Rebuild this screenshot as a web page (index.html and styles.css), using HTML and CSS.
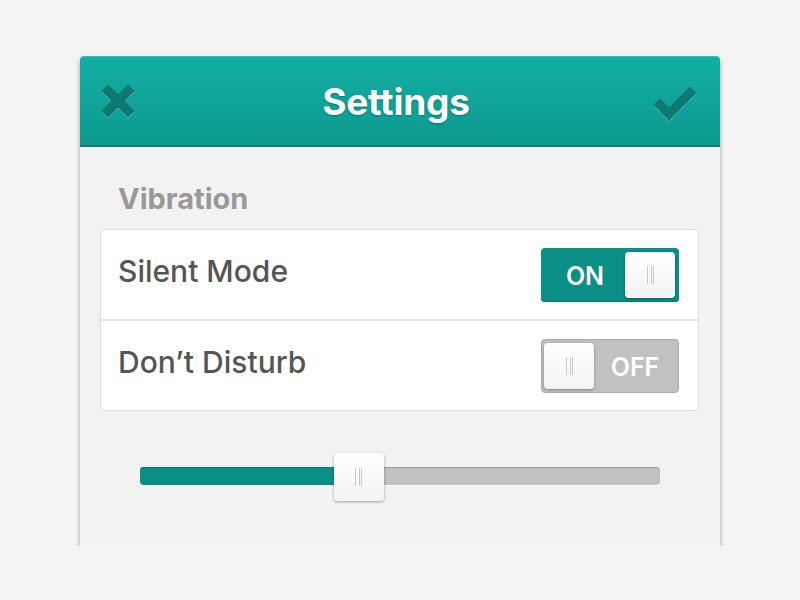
FILE: index.html
```html
<!DOCTYPE html>
<html lang="en">
<head>
	<meta charset="UTF-8">
	<title>Settings</title>
	<link rel="stylesheet" href="styles.css">
</head>
<body>
<div class="panel">
	<div class="head">
		<svg class="ico" width="40" height="40" viewBox="0 0 40 40">
			<path d="M4 10 L10 4 L20 14 L30 4 L36 10 L26 20 L36 30 L30 36 L20 26 L10 36 L4 30 L14 20 Z" fill="#0b7a72" stroke="#0a6f68" stroke-width="1"/>
		</svg>
		<h1>Settings</h1>
		<svg class="ico" width="48" height="40" viewBox="0 0 48 40">
			<path d="M2 24 L8 18 L17 27 L38 6 L44 12 L17 39 Z" fill="#0b7a72" stroke="#0a6f68" stroke-width="1"/>
		</svg>
	</div>
	<div class="body">
		<div class="label">Vibration</div>
		<ul class="list">
			<li>
				<span>Silent Mode</span>
				<div class="switch on">
					<b>ON</b>
					<i class="knob"><em></em></i>
				</div>
			</li>
			<li>
				<span>Don’t Disturb</span>
				<div class="switch off">
					<i class="knob"><em></em></i>
					<b>OFF</b>
				</div>
			</li>
		</ul>
		<div class="slider">
			<div class="fill" style="width:37.6%"></div>
			<i class="knob"><em></em></i>
			<div class="rest"></div>
		</div>
	</div>
</div>
</body>
</html>
```

FILE: styles.css
```css
*{
	margin:0;
	padding:0;
}
ul{
	list-style:none;
}
body{
	background:#f4f4f4;
	font-family:Inter, Lato, sans-serif;
}
.panel{
	width:640px;
	margin:56px auto 0;
	background:#f2f2f2;
	box-shadow:0 3px 5px rgba(0,0,0,0.35);
	border-radius:4px 4px 0 0;
}
.head{
	height:88px;
	display:flex;
	align-items:center;
	justify-content:space-between;
	padding:0 20px 0 18px;
	background:linear-gradient(#13aea4,#0d9a90);
	border-top:1px solid #2cc3b8;
	border-bottom:2px solid #0a7e76;
	border-radius:4px 4px 0 0;
}
.head h1{
	color:#fff;
	font-size:37px;
	font-weight:700;
	letter-spacing:-0.2px;
	text-shadow:0 1px 2px rgba(0,0,0,0.3);
	padding-left:2px;
}
.ico{
	filter:drop-shadow(0 1px 0 rgba(255,255,255,0.25));
}
.body{
	padding:28px 21px 0 20px;
}
.label{
	font-size:29px;
	font-weight:700;
	color:#999;
	padding-left:18px;
	line-height:48px;
	margin-bottom:6px;
}
.list{
	background:#fff;
	border:1px solid #ddd;
	border-radius:4px;
}
.list li{
	height:89px;
	display:flex;
	align-items:center;
	justify-content:space-between;
	padding:0 19px 0 17px;
}
.list li + li{
	border-top:2px solid #e2e2e2;
}
.list span{
	font-size:30px;
	font-weight:500;
	color:#555;
	padding-bottom:8px;
}
.switch{
	width:138px;
	height:54px;
	box-sizing:border-box;
	border-radius:4px;
	display:flex;
	align-items:center;
	justify-content:space-between;
	padding:0 4px;
}
.switch b{
	flex:1;
	text-align:center;
	color:#fff;
	font-size:25px;
	font-weight:600;
	padding-top:2px;
}
.switch.on{
	background:#0a8f86;
	box-shadow:inset 0 -1px 0 #087a72;
}
.switch.off{
	background:#c1c1c1;
	border:1px solid #aaa;
	padding:0 2px;
}
.knob{
	width:50px;
	height:46px;
	border-radius:4px;
	background:linear-gradient(#fff,#f3f3f3);
	box-shadow:0 1px 3px rgba(0,0,0,0.35);
	display:flex;
	align-items:center;
	justify-content:center;
}
.knob em{
	width:7px;
	height:18px;
	border-left:1px solid #c8c8c8;
	border-right:1px solid #c8c8c8;
	background:linear-gradient(90deg,transparent 3px,#c8c8c8 3px,#c8c8c8 4px,transparent 4px);
	box-sizing:border-box;
}
.slider{
	margin:42px 39px 0 40px;
	height:93px;
	display:flex;
	align-items:flex-start;
}
.slider .fill{
	height:18px;
	margin-top:14px;
	background:#0a8f86;
	border-radius:4px 0 0 4px;
	box-shadow:inset 0 1px 0 #06766f;
}
.slider .knob{
	width:50px;
	height:48px;
	flex:none;
	margin:0 -2px;
	position:relative;
}
.slider .rest{
	flex:1;
	height:18px;
	margin-top:14px;
	background:#c1c1c1;
	border-radius:0 4px 4px 0;
	box-shadow:inset 0 1px 1px #999, 0 1px 0 #fff;
}
```
